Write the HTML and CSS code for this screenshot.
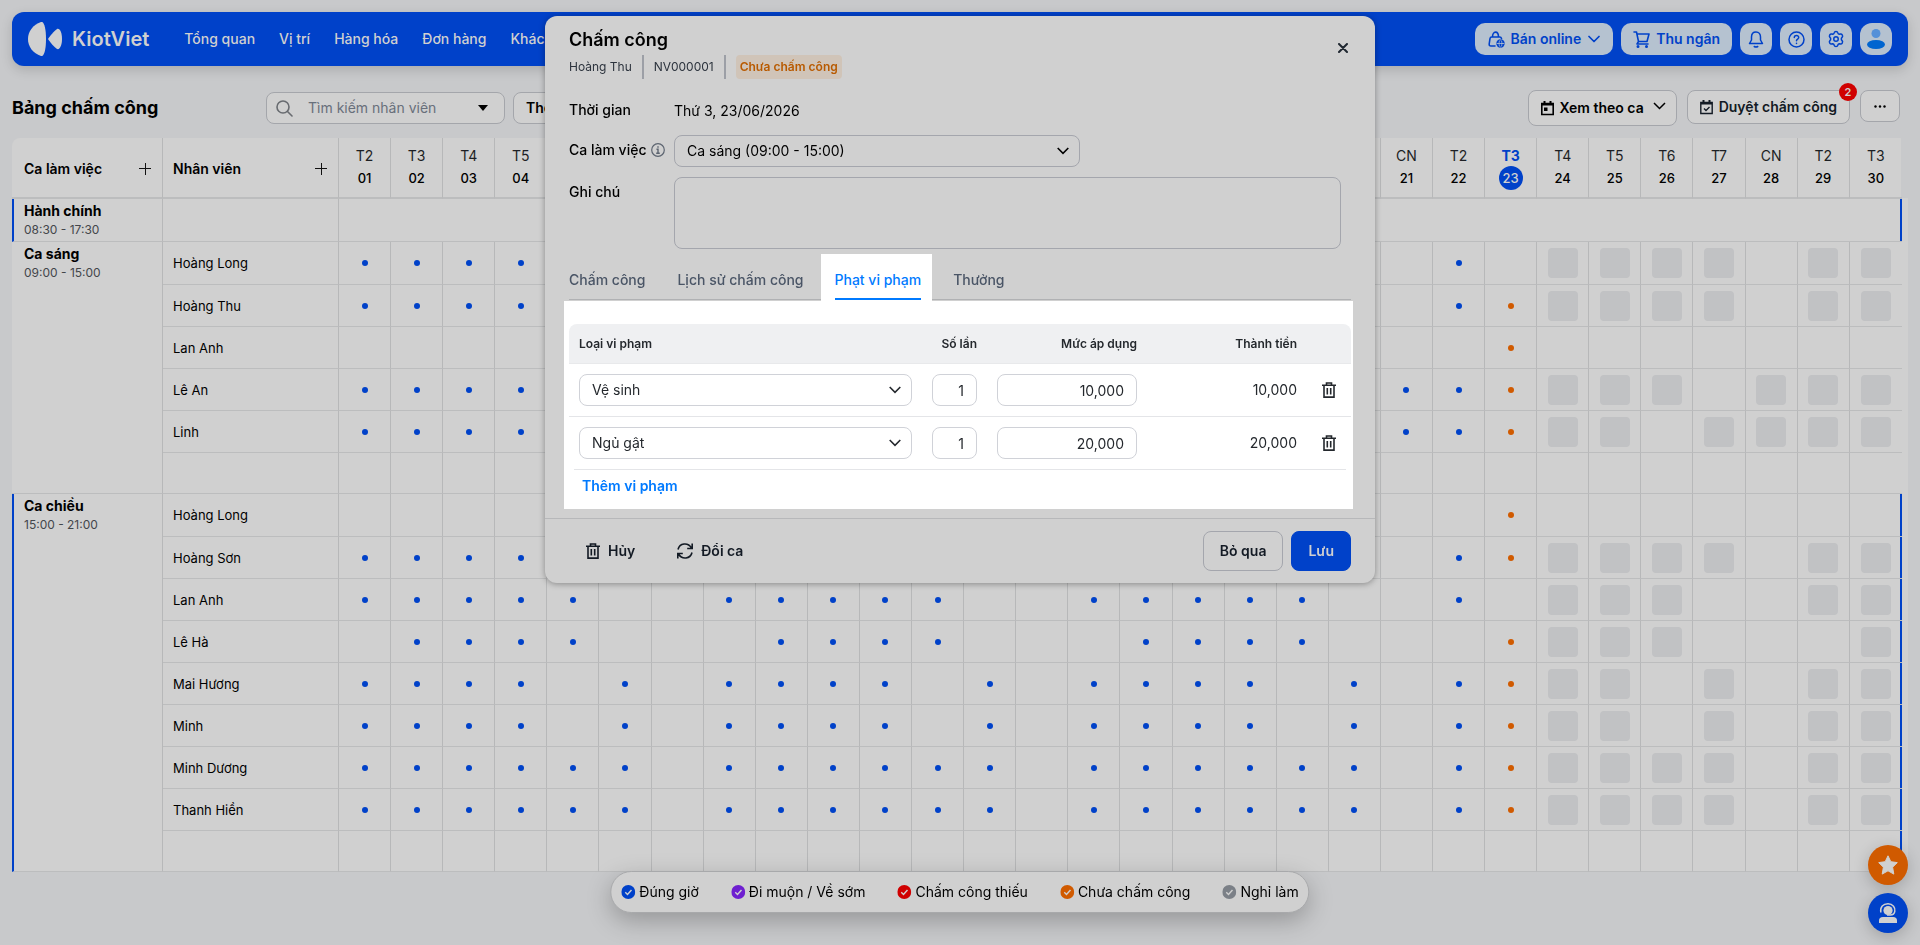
FILE: index.html
```html
<!DOCTYPE html>
<html lang="vi">
<head>
    <meta charset="utf-8">
    <title>Bảng chấm công</title>
    <link rel="stylesheet" href="styles.css">
    <script src="script.js" defer></script>
</head>
<body>
    <header class="topbar">
        <a class="logo" href="#">
            <svg width="34" height="34" viewBox="0 0 34 34" fill="#d0d0d0"><path d="M13 0C5 3 0 9 0 17s5 14 13 17c3 1 5-6 5-17S16-1 13 0z"/><path d="M20 17c2-3 6-8 9-10 3-1 5 4 5 10s-2 11-5 10c-3-2-7-7-9-10z"/></svg>
            KiotViet
        </a>
        <nav class="menu">
            <a href="#">Tổng quan</a>
            <a href="#">Vị trí</a>
            <a href="#">Hàng hóa</a>
            <a href="#">Đơn hàng</a>
            <a href="#">Khách hàng</a>
        </nav>
        <div class="top-actions">
            <button class="top-btn">
                <svg width="17" height="17" viewBox="0 0 17 17" fill="none" stroke="currentColor" stroke-width="1.600" stroke-linecap="round" stroke-linejoin="round"><path d="M7 15H3Q1 15 1.200 13L2 7.500Q2.200 6 3.700 6h8.100q1.300 0 1.700 1.500M4.500 6C4.500-.5 10.500-.5 10.500 6"/><circle cx="12.500" cy="12.500" r="4.200" fill="currentColor" stroke="none"/><path d="M9 12.500h7" stroke="#b5c2d0" stroke-width=".8"/><ellipse cx="12.500" cy="12.500" rx="1.500" ry="3.500" stroke="#b5c2d0" stroke-width=".7"/></svg>
                Bán online
                <svg class="chev" width="12" height="8" viewBox="0 0 12 8" fill="none" stroke="currentColor" stroke-width="1.700" stroke-linecap="round" stroke-linejoin="round"><path d="M1 1.500l5 5 5-5"/></svg>
            </button>
            <button class="top-btn cashier">
                <svg width="17" height="17" viewBox="0 0 17 17" fill="none" stroke="currentColor" stroke-width="1.600" stroke-linecap="round" stroke-linejoin="round"><path d="M1 1h2.500l2 9.500h8.500L16 3H4M5.500 10.500L4 13h11"/><circle cx="5" cy="15.500" r=".7"/><circle cx="13.500" cy="15.500" r=".7"/></svg>
                Thu ngân
            </button>
            <button class="top-btn icon" aria-label="Thông báo">
                <svg width="16" height="17" viewBox="0 0 16 17" fill="none" stroke="currentColor" stroke-width="1.500" stroke-linecap="round" stroke-linejoin="round"><path d="M8 1C5 1 3.500 3.200 3.500 6v3L1.500 12.500h13L12.500 9V6C12.500 3.200 11 1 8 1z"/><path d="M6.200 15.500q1.800 1 3.600 0"/></svg>
            </button>
            <button class="top-btn icon" aria-label="Trợ giúp">
                <svg width="17" height="17" viewBox="0 0 17 17" fill="none" stroke="currentColor" stroke-width="1.500" stroke-linecap="round"><circle cx="8.500" cy="8.500" r="7.500"/><path d="M6.300 6.600c0-3 4.500-2.800 4.400 0 0 1.500-2.200 1.500-2.200 3.200M8.500 12.200v.2"/></svg>
            </button>
            <button class="top-btn icon" aria-label="Thiết lập">
                <svg width="18" height="18" viewBox="0 0 24 24" fill="none" stroke="currentColor" stroke-width="2" stroke-linejoin="round"><circle cx="12" cy="12" r="3"/><path d="M9.600 3.500Q10 2 12 2t2.400 1.500l.4 1.300 1.600.9 1.500-.4q1.500-.3 2.400 1.300 1.100 1.800 0 2.900L19.200 11v2l1.100 1.500q1 1.100 0 2.900-.9 1.600-2.400 1.300l-1.500-.4-1.600.9-.4 1.300Q14 22 12 22t-2.400-1.500l-.4-1.300-1.600-.9-1.500.4q-1.500.3-2.400-1.300-1.100-1.800 0-2.900L4.800 13v-2L3.700 9.500q-1-1.100 0-2.900.9-1.600 2.400-1.300l1.500.4 1.600-.9z"/></svg>
            </button>
            <button class="top-btn icon avatar" aria-label="Tài khoản">
                <svg width="18" height="20" viewBox="0 0 18 20"><circle cx="9" cy="4.500" r="4.500" fill="#5590d8"/><ellipse cx="9" cy="15.500" rx="9" ry="4.500" fill="#0065d0"/></svg>
            </button>
        </div>
    </header>

    <div class="toolbar">
        <h1>Bảng chấm công</h1>
        <div class="search">
            <svg width="17" height="17" viewBox="0 0 17 17" fill="none" stroke="#686b70" stroke-width="1.600" stroke-linecap="round"><circle cx="7" cy="7" r="6"/><path d="M11.500 11.500l4.500 4.500"/></svg>
            <input type="text" placeholder="Tìm kiếm nhân viên" aria-label="Tìm kiếm nhân viên">
            <svg width="10" height="6" viewBox="0 0 10 6"><path d="M0 0h10L5 6z"/></svg>
        </div>
        <button class="tool-btn">Theo tháng</button>
        <div class="tool-right">
            <button class="tool-btn tall">
                <svg width="13" height="15" viewBox="0 0 13 15" fill="none" stroke="currentColor" stroke-width="1.600"><path d="M.8 2.500h11.400v11H.8z"/><path d="M.8 3.500h11.400M3.500 0v3M9.500 0v3" stroke-width="2"/><path d="M3 6.500h3.500v3.500H3z" fill="currentColor" stroke="none"/></svg>
                Xem theo ca
                <svg class="chev-lg" width="13" height="8" viewBox="0 0 13 8" fill="none" stroke="currentColor" stroke-width="1.500"><path d="M1 1l5.500 5.500L12 1"/></svg>
            </button>
            <button class="tool-btn approve">
                <svg width="13" height="15" viewBox="0 0 13 15" fill="none" stroke="currentColor" stroke-width="1.400"><path d="M.8 2.500h11.400v11H.8z"/><path d="M.8 3.500h11.400M3.500 0v3M9.500 0v3" stroke-width="2"/><path d="M4 8.500l2 2 3.500-3.500"/></svg>
                Duyệt chấm công
                <span class="badge">2</span>
            </button>
            <button class="tool-btn more" aria-label="Thêm">
                <svg width="12" height="3" viewBox="0 0 12 3" fill="currentColor"><circle cx="1.500" cy="1.500" r="1.200"/><circle cx="6" cy="1.500" r="1.200"/><circle cx="10.500" cy="1.500" r="1.200"/></svg>
            </button>
        </div>
    </div>

    <main class="board">
        <table class="schedule">
            <colgroup>
                <col class="col-shift">
                <col class="col-staff">
            </colgroup>
            <thead>
                <tr id="days">
                    <th class="head-label"><div>Ca làm việc <button class="add" aria-label="Thêm ca"></button></div></th>
                    <th class="head-label"><div>Nhân viên <button class="add" aria-label="Thêm nhân viên"></button></div></th>
                </tr>
            </thead>
            <tbody id="rows"></tbody>
        </table>
    </main>

    <div class="legend">
        <span class="item ontime"><svg width="14" height="14" viewBox="0 0 14 14"><circle cx="7" cy="7" r="7" fill="currentColor"/><path d="M4 7.300l2.200 2.200L10.200 5" fill="none" stroke="#d0d0d0" stroke-width="1.400"/></svg><span>Đúng giờ</span></span>
        <span class="item late"><svg width="14" height="14" viewBox="0 0 14 14"><circle cx="7" cy="7" r="7" fill="currentColor"/><path d="M4 7.300l2.200 2.200L10.200 5" fill="none" stroke="#d0d0d0" stroke-width="1.400"/></svg><span>Đi muộn / Về sớm</span></span>
        <span class="item missing"><svg width="14" height="14" viewBox="0 0 14 14"><circle cx="7" cy="7" r="7" fill="currentColor"/><path d="M4 7.300l2.200 2.200L10.200 5" fill="none" stroke="#d0d0d0" stroke-width="1.400"/></svg><span>Chấm công thiếu</span></span>
        <span class="item pending"><svg width="14" height="14" viewBox="0 0 14 14"><circle cx="7" cy="7" r="7" fill="currentColor"/><path d="M4 7.300l2.200 2.200L10.200 5" fill="none" stroke="#d0d0d0" stroke-width="1.400"/></svg><span>Chưa chấm công</span></span>
        <span class="item off"><svg width="14" height="14" viewBox="0 0 14 14"><circle cx="7" cy="7" r="7" fill="currentColor"/><path d="M4 7.300l2.200 2.200L10.200 5" fill="none" stroke="#d0d0d0" stroke-width="1.400"/></svg><span>Nghỉ làm</span></span>
    </div>

    <div class="fabs">
        <button class="fab star" aria-label="Đánh giá">
            <svg width="20" height="20" viewBox="0 0 20 20" fill="#d0d0d0" stroke="#d0d0d0" stroke-linejoin="round"><path d="M10 .8l2.800 5.900 6.500.9-4.700 4.600 1.200 6.900L10 15.800l-5.800 3.300 1.200-6.900L.7 7.600l6.500-.9z"/></svg>
        </button>
        <button class="fab support" aria-label="Hỗ trợ">
            <svg width="20" height="20" viewBox="0 0 20 20" fill="#d0d0d0"><path d="M1 20v-2.500Q1 14 5 14h10q4 0 4 3.500V20z"/><circle cx="10" cy="7.500" r="4.600"/><path d="M2.800 9.500C2 4 5 .8 10 .8s7.500 4 6.800 7.500q-.5 3.500-4.800 3.700H9" fill="none" stroke="#d0d0d0" stroke-width="1.500"/></svg>
        </button>
    </div>

    <div class="modal" role="dialog" aria-labelledby="modal-title">
        <div class="modal-head">
            <div>
                <h2 id="modal-title">Chấm công</h2>
                <div class="meta">
                    <span>Hoàng Thu</span>
                    <i></i>
                    <span>NV000001</span>
                    <i></i>
                    <span class="chip">Chưa chấm công</span>
                </div>
            </div>
            <button class="close" aria-label="Đóng">
                <svg width="10" height="10" viewBox="0 0 10 10" stroke="currentColor" stroke-width="2" stroke-linecap="round"><path d="M1 1l8 8M9 1L1 9"/></svg>
            </button>
        </div>

        <div class="form">
            <span class="label">Thời gian</span>
            <span class="value">Thứ 3, 23/06/2026</span>
            <label class="label" for="shift">Ca làm việc
                <svg width="14" height="14" viewBox="0 0 14 14" fill="none" stroke="#5c6470" stroke-width="1.200"><circle cx="7" cy="7" r="6.300"/><path d="M7 3.200v1.500M5.500 6.300H7v4M5.200 10.300h3.600" stroke-width="1.400"/></svg>
            </label>
            <div class="select-wrap shift-select">
                <select id="shift"><option>Ca sáng (09:00 - 15:00)</option></select>
                <svg class="arrow" width="12" height="8" viewBox="0 0 12 8" fill="none" stroke="currentColor" stroke-width="1.600"><path d="M.7 1L6 6.300 11.300 1"/></svg>
            </div>
            <label class="label" for="note">Ghi chú</label>
            <textarea id="note"></textarea>
        </div>

        <div class="tabs">
            <button class="tab">Chấm công</button>
            <button class="tab">Lịch sử chấm công</button>
            <button class="tab active"><span>Phạt vi phạm</span></button>
            <button class="tab">Thưởng</button>
        </div>

        <div class="panel">
            <table class="fines">
                <colgroup>
                    <col class="f-type"><col class="f-count"><col class="f-rate"><col class="f-total"><col class="f-del">
                </colgroup>
                <thead>
                    <tr>
                        <th class="left">Loại vi phạm</th>
                        <th>Số lần</th>
                        <th>Mức áp dụng</th>
                        <th>Thành tiền</th>
                        <th></th>
                    </tr>
                </thead>
                <tbody>
                    <tr>
                        <td>
                            <div class="select-wrap">
                                <select aria-label="Loại vi phạm"><option>Vệ sinh</option></select>
                                <svg class="arrow" width="12" height="8" viewBox="0 0 12 8" fill="none" stroke="currentColor" stroke-width="1.600"><path d="M.7 1L6 6.300 11.300 1"/></svg>
                            </div>
                        </td>
                        <td><input type="text" value="1" aria-label="Số lần"></td>
                        <td><input type="text" value="10,000" aria-label="Mức áp dụng"></td>
                        <td class="total">10,000</td>
                        <td class="del">
                            <button aria-label="Xóa"><svg width="14" height="16" viewBox="0 0 14 16" fill="none" stroke="currentColor" stroke-width="1.600"><path d="M0 3.300h14M2 3.300v11.800h10V3.300M4.500 3V1h5v2M5.300 6v6.500M8.700 6v6.500"/></svg></button>
                        </td>
                    </tr>
                    <tr>
                        <td>
                            <div class="select-wrap">
                                <select aria-label="Loại vi phạm"><option>Ngủ gật</option></select>
                                <svg class="arrow" width="12" height="8" viewBox="0 0 12 8" fill="none" stroke="currentColor" stroke-width="1.600"><path d="M.7 1L6 6.300 11.300 1"/></svg>
                            </div>
                        </td>
                        <td><input type="text" value="1" aria-label="Số lần"></td>
                        <td><input type="text" value="20,000" aria-label="Mức áp dụng"></td>
                        <td class="total">20,000</td>
                        <td class="del">
                            <button aria-label="Xóa"><svg width="14" height="16" viewBox="0 0 14 16" fill="none" stroke="currentColor" stroke-width="1.600"><path d="M0 3.300h14M2 3.300v11.800h10V3.300M4.500 3V1h5v2M5.300 6v6.500M8.700 6v6.500"/></svg></button>
                        </td>
                    </tr>
                </tbody>
            </table>
            <div class="add-row"><a href="#">Thêm vi phạm</a></div>
        </div>

        <div class="modal-foot">
            <button class="text-btn">
                <svg width="14" height="16" viewBox="0 0 14 16" fill="none" stroke="currentColor" stroke-width="1.600"><path d="M0 3.300h14M2 3.300v11.800h10V3.300M4.500 3V1h5v2M5.300 6v6.500M8.700 6v6.500"/></svg>
                Hủy
            </button>
            <button class="text-btn">
                <svg width="16" height="16" viewBox="0 0 16 16" fill="none" stroke="currentColor" stroke-width="1.600"><path d="M1 6.500C2.500 0 11 -1 14.500 5M15.200.5v5h-5M15 9.500C13.500 16 5 17 1.500 11M.8 15.500v-5h5"/></svg>
                Đổi ca
            </button>
            <button class="btn skip">Bỏ qua</button>
            <button class="btn save">Lưu</button>
        </div>
    </div>
</body>
</html>
```

FILE: styles.css
```css
* {
    box-sizing: border-box;
}
body {
    margin: 0;
    padding: 12px;
    min-height: 100vh;
    font-family: Inter, "Noto Sans", sans-serif;
    font-size: 14px;
    line-height: 20px;
    color: #000;
    background: #c8c9cb;
}
button, input, select, textarea {
    font: inherit;
    color: inherit;
}
button {
    padding: 0;
    border: 0;
    background: none;
}
a {
    text-decoration: none;
}

/* Top bar */
.topbar {
    display: flex;
    align-items: center;
    height: 54px;
    padding: 0 16px;
    border-radius: 12px;
    background: #0041c9;
    box-shadow: 0 4px 12px rgba(0, 0, 0, 0.15);
}
.logo {
    display: flex;
    align-items: center;
    gap: 10px;
    color: #d0d0d0;
    font-size: 20px;
    font-weight: 600;
}
.menu {
    display: flex;
    gap: 24px;
    margin-left: 35px;
}
.menu a {
    color: #d0d0d0;
    font-weight: 500;
}
.top-actions {
    display: flex;
    gap: 8px;
    margin-left: auto;
}
.top-btn {
    display: flex;
    align-items: center;
    justify-content: center;
    gap: 6px;
    height: 32px;
    padding: 0 13px;
    border-radius: 10px;
    background: #b5c2d0;
    color: #0041c9;
    font-weight: 600;
}
.chev {
    margin-left: 1px;
}
.top-btn.cashier {
    padding: 0 12px;
}
.top-btn.icon {
    width: 32px;
    padding: 0;
}
.top-btn.avatar {
    border-radius: 12px;
}

/* Title and filters */
.toolbar {
    display: flex;
    align-items: center;
    height: 72px;
    padding: 12px 8px 0 0;
}
.toolbar h1 {
    width: 254px;
    margin: 0;
    font-size: 18px;
    font-weight: 700;
}
.search {
    display: flex;
    align-items: center;
    width: 239px;
    height: 32px;
    margin-right: 8px;
    padding: 0 16px 0 9px;
    border: 1px solid #a4a6ab;
    border-radius: 8px;
    background: #d0d0d0;
}
.search input {
    flex: 1;
    min-width: 0;
    padding: 0 0 0 15px;
    border: 0;
    background: none;
}
.search input::placeholder {
    color: #686f7b;
}
.tool-btn {
    display: flex;
    align-items: center;
    gap: 5px;
    height: 32px;
    padding: 0 12px;
    border: 1px solid #a4a6ab;
    border-radius: 8px;
    background: #d0d0d0;
    font-weight: 600;
}
.tool-right {
    display: flex;
    align-items: flex-start;
    gap: 10px;
    height: 36px;
    margin-left: auto;
}
.tool-btn.tall {
    height: 36px;
    padding-right: 10px;
}
.chev-lg {
    margin: -4px 0 0 4px;
}
.tool-btn.approve {
    position: relative;
    gap: 6px;
    height: 34px;
    color: #131a24;
}
.badge {
    position: absolute;
    top: -8px;
    right: -8px;
    width: 18px;
    height: 18px;
    border-radius: 50%;
    background: #d00000;
    color: #d0d0d0;
    font-size: 11px;
    line-height: 18px;
    text-align: center;
}
.tool-btn.more {
    justify-content: center;
    width: 40px;
}

/* Schedule */
.board {
    padding-right: 6px;
    background: linear-gradient(#c8c9cb, #c8c9cb) right top / 7px 60px no-repeat #d0d0d0;
    border-radius: 8px 8px 0 0;
}
.schedule {
    width: 100%;
    border-spacing: 0;
    table-layout: fixed;
}
.col-shift {
    width: 151px;
}
.col-staff {
    width: 176px;
}
.schedule th, .schedule td {
    padding: 0;
    border-right: 1px solid #b7b8b9;
    border-bottom: 1px solid #bcbdbe;
}
.schedule th {
    height: 61px;
    border-bottom-width: 2px;
    color: #1c1f24;
    font-weight: 400;
}
.schedule th:last-child, .schedule td.last {
    border-right: 0;
}
.schedule th.head-label {
    color: #000;
    font-weight: 600;
    text-align: left;
}
.head-label div {
    display: flex;
    align-items: center;
    justify-content: space-between;
    padding: 2px 11px 0 12px;
}
.head-label + .head-label div {
    padding-left: 10px;
}
.add {
    width: 12px;
    height: 12px;
    background:
        linear-gradient(#111, #111) center / 12px 1px no-repeat,
        linear-gradient(#111, #111) center / 1px 12px no-repeat;
}
.day-num {
    display: block;
    width: 24px;
    height: 24px;
    margin: 0 auto;
    border-radius: 50%;
    color: #000;
    font-size: 13px;
    line-height: 24px;
    font-weight: 500;
}
.day-name {
    display: block;
    line-height: 20px;
}
.today .day-name {
    color: #0041c9;
    font-weight: 700;
}
.today .day-num {
    background: #0041c9;
    color: #d0d0d0;
}
.schedule td {
    height: 42px;
    text-align: center;
}
.schedule tr.first td {
    height: 43px;
}
.schedule tr.blank td {
    height: 41px;
}
.schedule td.shift {
    padding: 2px 10px 0 12px;
    text-align: left;
    vertical-align: top;
}
.schedule td.shift.own {
    border-left: 2px solid #0041c9;
    padding-left: 10px;
}
.schedule td.end {
    box-shadow: inset -2px 0 #0041c9;
}
.shift strong {
    display: block;
    font-weight: 700;
}
.shift small {
    display: block;
    color: #43464b;
    font-size: 12px;
    line-height: 18px;
}
.schedule td.staff {
    padding-left: 10px;
    font-size: 13px;
    text-align: left;
}
.dot {
    display: block;
    width: 6px;
    height: 6px;
    margin: 0 auto;
    border-radius: 50%;
    background: #0041c9;
}
.dot.orange {
    background: #d05a00;
}
.slot {
    display: block;
    width: 30px;
    height: 30px;
    margin: 0 auto;
    border-radius: 4px;
    background: #c1c2c4;
}

/* Legend */
.legend {
    position: fixed;
    bottom: 32px;
    left: 50%;
    transform: translateX(-50%);
    display: flex;
    align-items: center;
    gap: 32px;
    height: 42px;
    padding: 0 10px;
    border: 1px solid #a8a9ab;
    border-radius: 21px;
    background: #d0d0d0;
    box-shadow: 0 8px 24px rgba(0, 0, 0, 0.25);
    white-space: nowrap;
}
.item {
    display: flex;
    align-items: center;
    gap: 4px;
}
.item span {
    color: #000;
}
.ontime { color: #0041c9; }
.late { color: #6e1fd0; }
.missing { color: #d00000; }
.pending { color: #d05a00; }
.off { color: #7b8087; }

/* Floating buttons */
.fabs {
    position: fixed;
    right: 12px;
    bottom: 12px;
    display: flex;
    flex-direction: column;
    gap: 8px;
}
.fab {
    display: flex;
    align-items: center;
    justify-content: center;
    width: 40px;
    height: 40px;
    border-radius: 50%;
    box-shadow: 0 4px 16px rgba(0, 0, 0, 0.2);
}
.fab.star {
    background: #d05a00;
}
.fab.support {
    background: #0041c9;
}

/* Modal */
.modal {
    position: fixed;
    top: 16px;
    left: 50%;
    transform: translateX(-50%);
    width: 830px;
    border-radius: 12px;
    background: #d0d0d0;
    box-shadow: 0 1px 6px rgba(0, 0, 0, 0.35);
}
.modal-head {
    display: flex;
    justify-content: space-between;
    padding: 12px 27px 0 24px;
}
.modal-head h2 {
    margin: 0;
    font-size: 18px;
    line-height: 24px;
    font-weight: 600;
}
.meta {
    display: flex;
    align-items: center;
    gap: 10px;
    height: 24px;
    margin-top: 3px;
    color: #2c333d;
    font-size: 12px;
}
.meta i {
    width: 2px;
    height: 24px;
    background: #9c9fa6;
}
.chip {
    padding: 2px 4px;
    border-radius: 4px;
    background: #d0c4b8;
    color: #b85a00;
    font-weight: 600;
}
.close {
    align-self: flex-start;
    margin-top: 10px;
    color: #1f2730;
}
.form {
    display: grid;
    grid-template-columns: 105px 1fr;
    row-gap: 10px;
    padding: 20px 34px 0 24px;
}
.label {
    display: flex;
    gap: 5px;
    align-items: center;
    height: 30px;
    font-weight: 500;
}
.value {
    height: 26px;
    line-height: 24px;
}
.form > .label:first-child {
    height: 22px;
}
.select-wrap {
    position: relative;
    height: 32px;
}
.shift-select {
    width: 406px;
}
select {
    width: 100%;
    height: 32px;
    padding: 0 12px;
    border: 1px solid #a4a6ad;
    border-radius: 8px;
    background: none;
    appearance: none;
}
.arrow {
    position: absolute;
    top: 12px;
    right: 11px;
    pointer-events: none;
}
textarea {
    display: block;
    width: 100%;
    height: 72px;
    border: 1px solid #a4a6ad;
    border-radius: 8px;
    background: none;
    resize: none;
}
.tabs {
    display: flex;
    height: 46px;
    margin: 5px 24px 0;
    border-bottom: 1px solid #b0b1b3;
}
.tab {
    height: 47px;
    margin-right: 32px;
    padding-top: 5px;
    color: #4a5566;
    font-weight: 500;
}
.tab.active {
    position: relative;
    margin: 0 21px 0 -15px;
    padding: 5px 11px 0 14px;
    background: #fff;
    color: #007aff;
}
.tab.active span {
    display: block;
    height: 40px;
    padding-top: 10px;
    border-bottom: 2px solid #007aff;
}
.panel {
    margin: 1px 22px 0 19px;
    padding: 23px 2px 12px 5px;
    background: #fff;
    color: #24282d;
}
.fines {
    width: 100%;
    border-spacing: 0;
    table-layout: fixed;
}
.f-type { width: 353px; }
.f-count { width: 65px; }
.f-rate { width: 160px; }
.f-del { width: 44px; }
.fines th {
    height: 40px;
    padding: 0 10px;
    border-bottom: 1px solid #e8e9eb;
    background: #eff0f2;
    font-size: 12px;
    font-weight: 600;
    text-align: right;
    white-space: nowrap;
}
.fines th.left {
    text-align: left;
    border-radius: 8px 0 0 0;
}
.fines th:last-child {
    border-radius: 0 8px 0 0;
}
.fines td {
    height: 53px;
    padding: 0 10px;
    border-bottom: 1px solid #e4e5e8;
}
.fines tbody tr:last-child td {
    height: 52px;
    border-bottom: 0;
}
.fines select, .fines input {
    border: 1px solid #d0d2d8;
}
.fines input {
    display: block;
    width: 100%;
    height: 32px;
    padding: 0 12px;
    border-radius: 8px;
    text-align: right;
}
.fines .total {
    text-align: right;
}
.fines .del {
    padding: 0;
    text-align: center;
}
.del button, .del svg {
    display: block;
    margin: 0 auto;
}
.add-row {
    height: 28px;
    margin: 0 5px;
    padding: 6px 8px 0;
    border-top: 1px solid #e4e5e8;
}
.add-row a {
    color: #007aff;
    font-weight: 600;
}
.modal-foot {
    display: flex;
    align-items: center;
    gap: 8px;
    height: 65px;
    margin-top: 9px;
    padding: 0 24px 0 41px;
    border-top: 1px solid #b7b8ba;
}
.text-btn {
    display: flex;
    align-items: center;
    gap: 8px;
    margin-right: 34px;
    color: #131a24;
    font-weight: 600;
}
.btn {
    height: 40px;
    padding: 0 16px;
    border: 1px solid #a4a6ad;
    border-radius: 8px;
    color: #131a24;
    font-weight: 600;
}
.skip {
    margin-left: auto;
}
.save {
    border-color: #0041c9;
    background: #0041c9;
    color: #d0d0d0;
}
```

FILE: script.js
```js
const weekdays = ["T2", "T3", "T4", "T5", "T6", "T7", "CN"];
const today = 23;

// One character per day: b = on time, o = not clocked in, g = planned, . = empty
const shifts = [
    { name: "Hành chính", time: "08:30 - 17:30", own: true, staff: [] },
    {
        name: "Ca sáng", time: "09:00 - 15:00", own: false, staff: [
            ["Hoàng Long", "bbbb.................b.gggg.gg"],
            ["Hoàng Thu",  "bbbb.................bogggg.gg"],
            ["Lan Anh",    "......................o......."],
            ["Lê An",      "bbbb................bboggg.ggg"],
            ["Linh",       "bbbb................bbogg.gggg"]
        ]
    },
    {
        name: "Ca chiều", time: "15:00 - 21:00", own: true, staff: [
            ["Hoàng Long", "......................o......."],
            ["Hoàng Sơn",  "bbbb.................bogggg.gg"],
            ["Lan Anh",    "bbbbb..bbbbb..bbbbb..b.ggg..gg"],
            ["Lê Hà",      ".bbbb...bbbb...bbbb...oggg...g"],
            ["Mai Hương",  "bbbb.b.bbbb.b.bbbb.b.bogg.g.gg"],
            ["Minh",       "bbbb.b.bbbb.b.bbbb.b.bogg.g.gg"],
            ["Minh Dương", "bbbbbb.bbbbbb.bbbbbb.bogggg.gg"],
            ["Thanh Hiền", "bbbbbb.bbbbbb.bbbbbb.bogggg.gg"]
        ]
    }
];

const marks = {
    b: '<span class="dot"></span>',
    o: '<span class="dot orange"></span>',
    g: '<span class="slot"></span>',
    ".": ""
};

let head = "";
for (let d = 1; d <= 30; d++) {
    const num = String(d).padStart(2, "0");
    head += `<th class="${d === today ? "today" : ""}"><span class="day-name">${weekdays[(d - 1) % 7]}</span><span class="day-num">${num}</span></th>`;
}
document.getElementById("days").insertAdjacentHTML("beforeend", head);

let body = "";
shifts.forEach(shift => {
    const shiftCell = span => `<td class="shift ${shift.own ? "own" : ""}" rowspan="${span}"><strong>${shift.name}</strong><small>${shift.time}</small></td>`;
    const lastClass = shift.own ? "last end" : "last";

    if (!shift.staff.length) {
        body += `<tr class="first">${shiftCell(1)}<td></td><td class="${lastClass}" colspan="30"></td></tr>`;
        return;
    }

    const list = shift.staff.concat([["", ".".repeat(30)]]);
    list.forEach(([name, days], i) => {
        const rowClass = i === 0 ? "first" : i === list.length - 1 ? "blank" : "";
        body += `<tr class="${rowClass}">${i === 0 ? shiftCell(list.length) : ""}<td class="staff">${name}</td>`;
        [...days].forEach((mark, d) => {
            body += `<td class="${d === 29 ? lastClass : ""}">${marks[mark]}</td>`;
        });
        body += "</tr>";
    });
});
document.getElementById("rows").innerHTML = body;
```
